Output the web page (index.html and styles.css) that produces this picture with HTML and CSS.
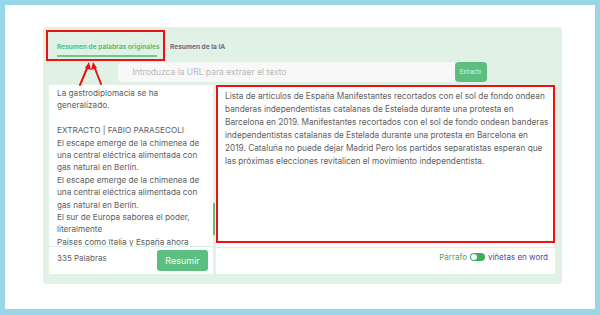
FILE: index.html
```html
<!DOCTYPE html>
<html lang="es">
<head>
<meta charset="utf-8">
<title>Resumen</title>
<link rel="stylesheet" href="styles.css">
</head>
<body>
<div class="frame">
  <div class="panel">
    <div class="tabs">
      <div class="tab active">Resumen de palabras originales</div>
      <div class="tab">Resumen de la IA</div>
    </div>
    <div class="urlrow">
      <div class="urlinput">Introduzca la URL para extraer el texto</div>
      <div class="extract">Extracto</div>
    </div>
    <div class="content">
      <div class="left">
        <div class="source">La gastrodiplomacia se ha<br>generalizado.<br><br>EXTRACTO | FABIO PARASECOLI<br>El escape emerge de la chimenea de<br>una central eléctrica alimentada con<br>gas natural en Berlín.<br>El escape emerge de la chimenea de<br>una central eléctrica alimentada con<br>gas natural en Berlín.<br>El sur de Europa saborea el poder,<br>literalmente<br>Países como Italia y España ahora</div>
        <div class="thumb"></div>
        <div class="leftfoot">
          <span class="count">335 Palabras</span>
          <span class="btn">Resumir</span>
        </div>
      </div>
      <div class="right">
        <div class="output">Lista de artículos de España Manifestantes recortados con el sol de fondo ondean<br>banderas independentistas catalanas de Estelada durante una protesta en<br>Barcelona en 2019. Manifestantes recortados con el sol de fondo ondean banderas<br>independentistas catalanas de Estelada durante una protesta en Barcelona en<br>2019. Cataluña no puede dejar Madrid Pero los partidos separatistas esperan que<br>las próximas elecciones revitalicen el movimiento independentista.</div>
        <div class="rightfoot">
          <span class="para">Párrafo</span>
          <span class="toggle"><span class="knob"></span></span>
          <span class="bullets">viñetas en word</span>
        </div>
      </div>
    </div>
    <div class="tabmark"></div>
    <svg class="arrows" width="40" height="26" viewBox="0 0 40 26">
      <g stroke="#e8140f" stroke-width="2" fill="none" stroke-linecap="round">
        <line x1="4" y1="24" x2="12" y2="5"/>
        <line x1="25" y1="23" x2="18" y2="5"/>
      </g>
      <g fill="#e8140f">
        <polygon points="13,1 15,9 9,7"/>
        <polygon points="17,1 21,7 15,9"/>
      </g>
    </svg>
  </div>
</div>
</body>
</html>
```
FILE: styles.css
```css
* { box-sizing: border-box; }
html, body { margin: 0; padding: 0; }
body {
  background: #98d7e7;
  width: 600px;
  height: 315px;
  overflow: hidden;
  font-family: "Inter", "Noto Sans", sans-serif;
  color: #5e5e5e;
}
.frame {
  margin: 5px;
  width: 590px;
  height: 304px;
  background: #fff;
  padding: 22px 33px 0 38px;
}
.panel {
  position: relative;
  width: 519px;
  height: 257px;
  background: #e1f1e6;
  border-radius: 4px;
  padding: 0 7px 10px 6px;
  display: flex;
  flex-direction: column;
}
.tabs {
  display: flex;
  gap: 13px;
  padding: 15px 0 0 8px;
  height: 30px;
}
.tab {
  font-size: 6.6px;
  font-weight: 700;
  line-height: 10px;
  color: #6a6a8a;
  padding-bottom: 3px;
  height: 15px;
  white-space: nowrap;
}
.tab.active {
  color: #5cbd7b;
  border-bottom: 2px solid #6cc98a;
  width: 100px;
}
.urlrow {
  margin-top: 5px;
  display: flex;
  justify-content: center;
  height: 20px;
}
.urlinput {
  width: 337px;
  background: #f8f8f8;
  border-radius: 4px 0 0 4px;
  padding-left: 15px;
  font-size: 8.5px;
  line-height: 20px;
  color: #b8b8b8;
}
.extract {
  width: 32px;
  background: #5cbf80;
  border-radius: 4px;
  color: #e6f6ea;
  font-size: 5.5px;
  line-height: 20px;
  text-align: center;
}
.content {
  margin-top: 3px;
  display: flex;
  gap: 3px;
  height: 189px;
}
.left {
  position: relative;
  width: 164px;
  background: #fff;
  display: flex;
  flex-direction: column;
}
.source {
  height: 162px;
  overflow: hidden;
  padding: 2px 0 0 8px;
  font-size: 8.2px;
  line-height: 12.4px;
  white-space: nowrap;
  border-bottom: 1px solid #dcefe3;
}
.thumb {
  position: absolute;
  right: -2px;
  top: 118px;
  width: 2px;
  height: 32px;
  background: #5fbd7e;
}
.leftfoot {
  flex: 1;
  display: flex;
  justify-content: space-between;
  align-items: flex-start;
  padding: 3px 5px 0 8px;
}
.count {
  font-size: 8px;
  line-height: 12px;
  margin-top: 2px;
}
.btn {
  width: 51px;
  height: 21px;
  background: #5cbf80;
  border-radius: 3px;
  color: #f2fbf5;
  font-size: 9px;
  line-height: 21px;
  text-align: center;
}
.right {
  flex: 1;
  background: #fff;
  display: flex;
  flex-direction: column;
}
.output {
  height: 158px;
  border: 2px solid #ee1111;
  padding: 3px 0 0 7px;
  font-size: 8.25px;
  line-height: 13px;
  white-space: nowrap;
  overflow: hidden;
}
.rightfoot {
  margin-top: 4px;
  border-top: 1px solid #dcefe3;
  flex: 1;
  display: flex;
  justify-content: flex-end;
  align-items: center;
  gap: 3px;
  padding: 0 7px 8px 0;
  font-size: 8px;
}
.para { color: #4ea65e; }
.bullets { color: #4a4aa8; }
.toggle {
  position: relative;
  width: 15px;
  height: 8px;
  border-radius: 4px;
  background: #3cae5e;
}
.knob {
  position: absolute;
  left: 1px;
  top: 1px;
  width: 6px;
  height: 6px;
  border-radius: 50%;
  background: #fff;
}
.tabmark {
  position: absolute;
  left: 3px;
  top: 3px;
  width: 119px;
  height: 31px;
  border: 2px solid #ee1111;
}
.arrows {
  position: absolute;
  left: 33px;
  top: 34px;
}
```
